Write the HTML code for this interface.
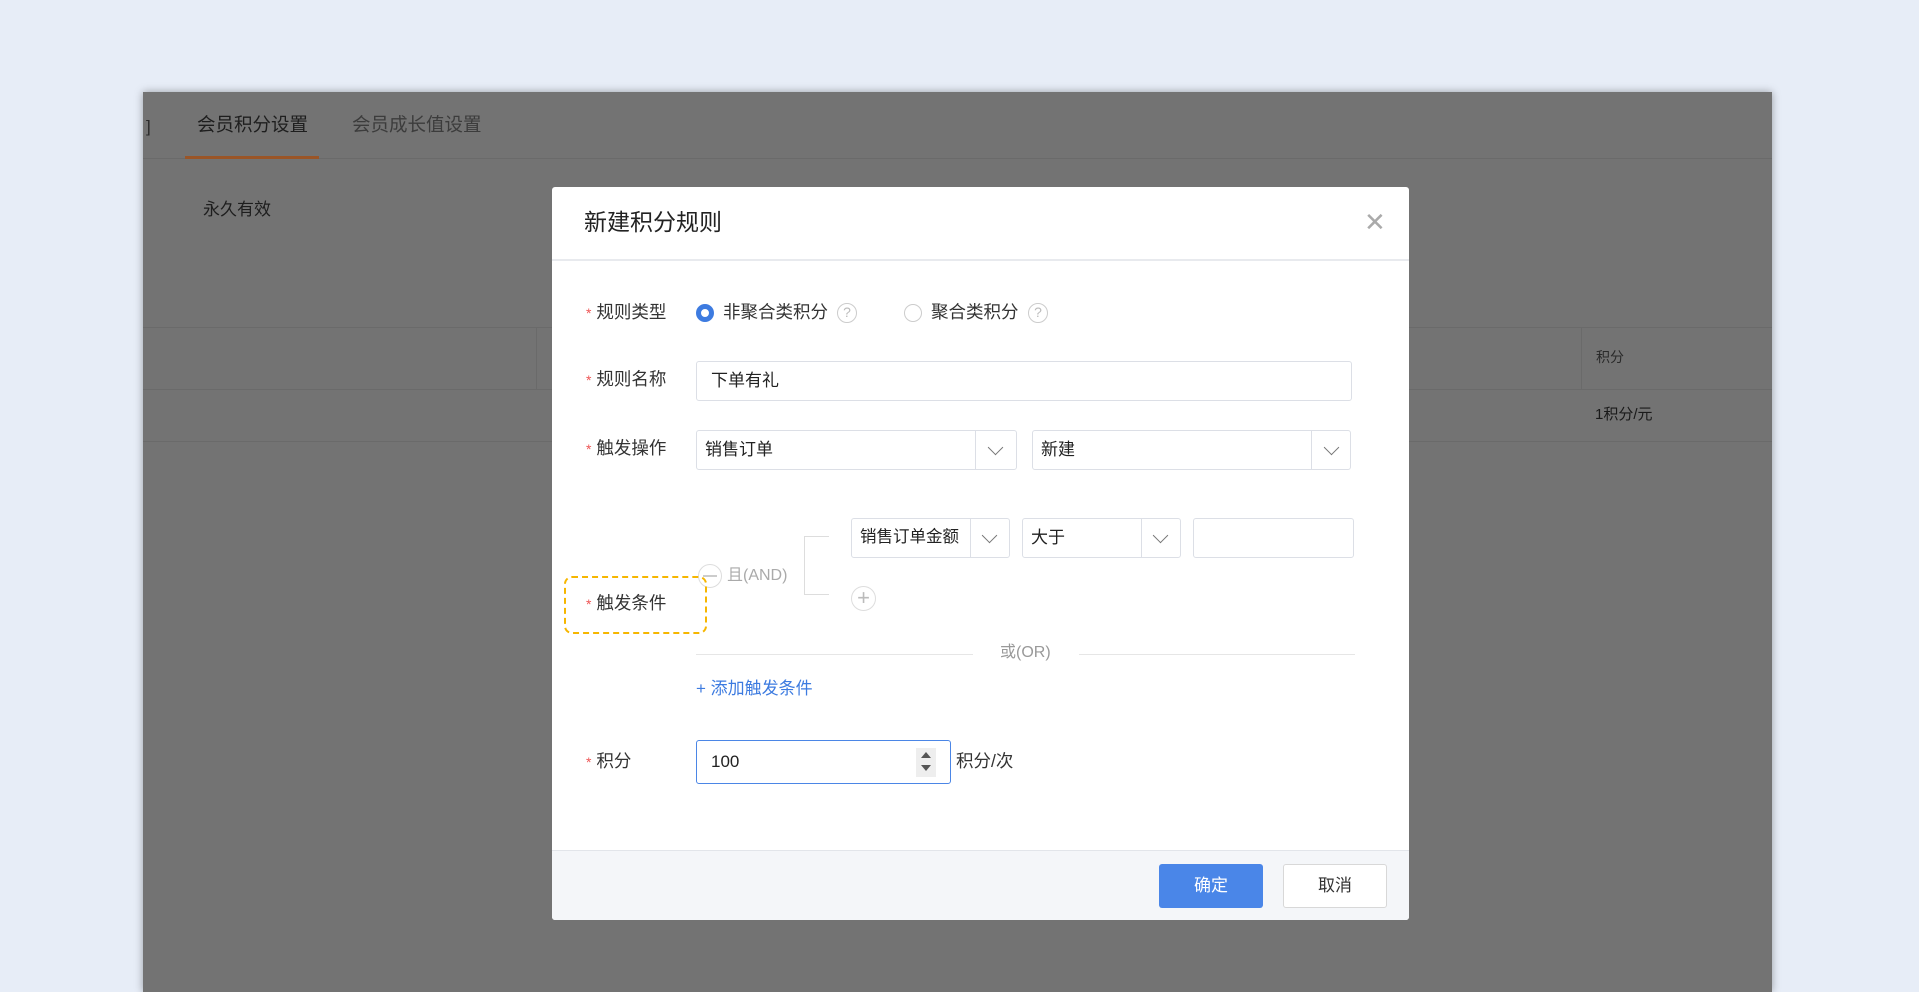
<!DOCTYPE html>
<html><head><meta charset="utf-8"><style>
*{box-sizing:border-box;margin:0;padding:0}
body{width:1919px;height:980px;background:#e7edf7;position:relative;overflow:hidden;font-family:"Liberation Sans","Noto Sans CJK SC",sans-serif;color:#333}
.abs{position:absolute}
.panel{left:143px;top:92px;width:1629px;height:900px;background:#737373;box-shadow:0 0 8px rgba(0,0,0,.35)}
.t{position:absolute;white-space:nowrap;line-height:1}
.lbl{font-size:17.5px;color:#333}
.star{color:#e55;font-size:14px}
.box{position:absolute;border:1px solid #dcdfe6;border-radius:3px;background:#fff;font-size:17px;color:#222;line-height:37px;white-space:nowrap}
.sel .dv{position:absolute;top:0;bottom:0;border-left:1px solid #dcdfe6}
.chev{position:absolute;width:11px;height:11px;border-right:1.5px solid #777;border-bottom:1.5px solid #777;transform:rotate(45deg)}
.q{position:absolute;width:20px;height:20px;border:1.5px solid #ccc;border-radius:50%;color:#bbb;font-size:14px;text-align:center;line-height:17px}
</style></head><body>
<div class="abs panel"></div>
<div class="t" style="left:146px;top:118px;font-size:17px;color:#2a2a2a">]</div>
<div class="t" style="left:197px;top:116px;font-size:18.5px;color:#1e1e1e">会员积分设置</div>
<div class="t" style="left:352px;top:116px;font-size:18.5px;color:#3c3c3c">会员成长值设置</div>
<div class="abs" style="left:143px;top:158px;width:1629px;height:1px;background:#6a6a6a"></div>
<div class="abs" style="left:185px;top:156px;width:134px;height:3px;background:#9a5527"></div>
<div class="t" style="left:203px;top:201px;font-size:17px;color:#1e1e1e">永久有效</div>
<div class="abs" style="left:143px;top:327px;width:1629px;height:1px;background:#6a6a6a"></div>
<div class="abs" style="left:143px;top:389px;width:1629px;height:1px;background:#6a6a6a"></div>
<div class="abs" style="left:143px;top:441px;width:1629px;height:1px;background:#6a6a6a"></div>
<div class="abs" style="left:536px;top:327px;width:1px;height:62px;background:#6a6a6a"></div>
<div class="abs" style="left:1581px;top:327px;width:1px;height:62px;background:#6a6a6a"></div>
<div class="t" style="left:1596px;top:350px;font-size:14px;color:#2a2a2a">积分</div>
<div class="t" style="left:1595px;top:407px;font-size:15px;color:#1a1a1a">1积分/元</div>

<div class="abs" style="left:552px;top:187px;width:857px;height:733px;background:#fff;border-radius:3px;overflow:hidden">
 <div class="t" style="left:32px;top:24px;font-size:23px;color:#222">新建积分规则</div>
 <div class="t" style="left:812px;top:22px;font-size:26px;color:#aaa">✕</div>
 <div class="abs" style="left:0;top:72px;width:857px;height:2px;background:#e8eaee"></div>

 <div class="t lbl" style="left:34px;top:117px"><span class="star">*</span> 规则类型</div>
 <div class="abs" style="left:144px;top:117px;width:18px;height:18px;border-radius:50%;border:5px solid #3d7be0"></div>
 <div class="t lbl" style="left:171px;top:117px">非聚合类积分</div>
 <div class="q" style="left:285px;top:116px">?</div>
 <div class="abs" style="left:352px;top:117px;width:18px;height:18px;border-radius:50%;border:1.5px solid #ccc"></div>
 <div class="t lbl" style="left:379px;top:117px">聚合类积分</div>
 <div class="q" style="left:476px;top:116px">?</div>

 <div class="t lbl" style="left:34px;top:184px"><span class="star">*</span> 规则名称</div>
 <div class="box" style="left:144px;top:174px;width:656px;height:40px;padding:0 14px">下单有礼</div>

 <div class="t lbl" style="left:34px;top:253px"><span class="star">*</span> 触发操作</div>
 <div class="box sel" style="left:144px;top:243px;width:321px;height:40px;padding:0 8px">销售订单<div class="dv" style="left:278px"></div><div class="chev" style="left:293px;top:11px"></div></div>
 <div class="box sel" style="left:480px;top:243px;width:319px;height:40px;padding:0 8px">新建<div class="dv" style="left:278px"></div><div class="chev" style="left:293px;top:11px"></div></div>

 <div class="box sel" style="left:299px;top:331px;width:159px;height:40px;padding:0 8px;font-size:16.5px">销售订单金额<div class="dv" style="left:118px"></div><div class="chev" style="left:132px;top:11px"></div></div>
 <div class="box sel" style="left:470px;top:331px;width:159px;height:40px;padding:0 8px">大于<div class="dv" style="left:118px"></div><div class="chev" style="left:132px;top:11px"></div></div>
 <div class="box" style="left:641px;top:331px;width:161px;height:40px"></div>
 <div class="abs" style="left:252px;top:349px;width:25px;height:59px;border:1px solid #ddd;border-right:none"></div>
 <div class="abs" style="left:146px;top:377px;width:24px;height:24px;border-radius:50%;border:1.5px solid #ddd"></div>
 <div class="abs" style="left:151px;top:388px;width:14px;height:2px;background:#ccc"></div>
 <div class="t" style="left:175px;top:381px;font-size:16px;color:#aaa">且(AND)</div>
 <div class="abs" style="left:299px;top:399px;width:25px;height:25px;border-radius:50%;border:1.5px solid #ddd;color:#bbb;font-size:22px;text-align:center;line-height:21px">+</div>
 <div class="abs" style="left:12px;top:389px;width:143px;height:58px;border:2.5px dashed #f6b600;border-radius:8px"></div>
 <div class="t lbl" style="left:34px;top:408px"><span class="star">*</span> 触发条件</div>

 <div class="abs" style="left:144px;top:467px;width:277px;height:1px;background:#e6e6e6"></div>
 <div class="t" style="left:448px;top:458px;font-size:16px;color:#999">或(OR)</div>
 <div class="abs" style="left:527px;top:467px;width:276px;height:1px;background:#e6e6e6"></div>
 <div class="t" style="left:144px;top:493px;font-size:17px;color:#3d7be0">+ 添加触发条件</div>

 <div class="t lbl" style="left:34px;top:566px"><span class="star">*</span> 积分</div>
 <div class="box" style="left:144px;top:553px;width:255px;height:44px;border-color:#4b86e6;padding:0 14px;line-height:41px">100
  <div class="abs" style="left:219px;top:7px;width:20px;height:29px;background:#eee"></div>
  <div class="abs" style="left:224px;top:11px;border:5px solid transparent;border-bottom:6px solid #555;border-top:none"></div>
  <div class="abs" style="left:224px;top:24px;border:5px solid transparent;border-top:6px solid #555;border-bottom:none"></div>
 </div>
 <div class="t lbl" style="left:404px;top:566px">积分/次</div>

 <div class="abs" style="left:0;top:663px;width:857px;height:70px;background:#f4f6f9;border-top:1px solid #e2e5ea"></div>
 <div class="abs" style="left:607px;top:677px;width:104px;height:44px;background:#4a86e8;border-radius:3px;color:#fff;font-size:17px;text-align:center;line-height:44px">确定</div>
 <div class="abs" style="left:731px;top:677px;width:104px;height:44px;background:#fff;border:1px solid #d8d8d8;border-radius:3px;color:#333;font-size:17px;text-align:center;line-height:42px">取消</div>
</div>
</body></html>
